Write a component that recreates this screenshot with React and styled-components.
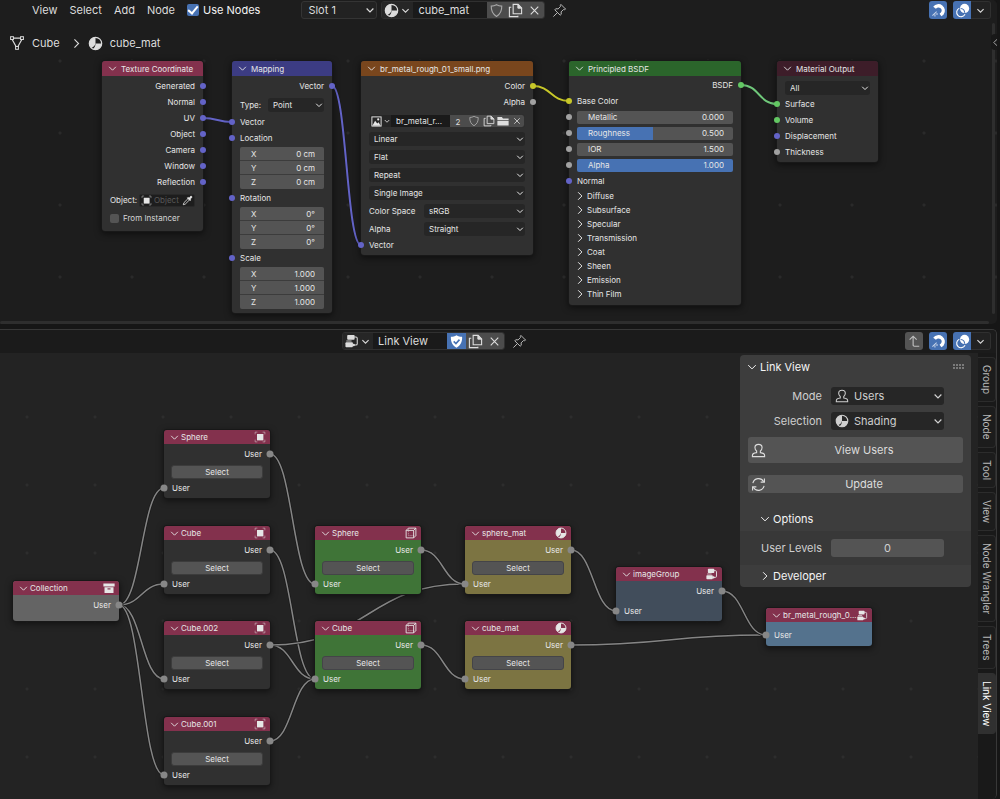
import React from "react";
import styled, { createGlobalStyle } from "styled-components";

const GlobalStyle = createGlobalStyle`
  * { box-sizing: border-box; }
  body {
    margin: 0;
    background: #161616;
    color: #dcdcdc;
    font-family: Inter, "Liberation Sans", sans-serif;
    font-size: 11px;
  }
  button, input, select { font: inherit; color: inherit; margin: 0; }
`;

/* ---------- icons ---------- */

const Svg = styled.svg`
  display: block;
  flex: none;
  width: ${(p) => p.$size || 16}px;
  height: ${(p) => p.$size || 16}px;
  fill: none;
  stroke: currentColor;
  stroke-width: 1;
`;

const Icon = ({ size, children }) => (
  <Svg $size={size} viewBox="0 0 16 16" aria-hidden="true">
    {children}
  </Svg>
);

const ChevronDown = ({ size }) => (
  <Icon size={size}>
    <path d="M3.500 6l4.500 4.500L12.500 6" strokeWidth="1.600" />
  </Icon>
);
const PanelDown = ({ size }) => (
  <Icon size={size}>
    <path d="M2 5l6 6 6-6" strokeWidth="1.600" />
  </Icon>
);
const ChevronRight = ({ size }) => (
  <Icon size={size}>
    <path d="M5 2l6 6-6 6" strokeWidth="1.600" />
  </Icon>
);
const ChevronLeft = ({ size }) => (
  <Icon size={size}>
    <path d="M11 2L5 8l6 6" strokeWidth="1.700" />
  </Icon>
);
const MaterialIcon = ({ size }) => (
  <Icon size={size}>
    <circle cx="8" cy="8" r="6.600" strokeWidth="1.300" />
    <path d="M8 1.400A6.600 6.600 0 0 0 1.400 8c0 1.900.8 3.600 2.100 4.800C5.500 12 7.500 10.500 8 8z" fill="currentColor" stroke="none" />
    <path d="M8 8h6.600c0 3.600-2.900 6.600-6.600 6.600-1 0-2-.3-2.900-.7C7 12.500 8 10.500 8 8z" fill="currentColor" stroke="none" />
  </Icon>
);
const MeshIcon = ({ size }) => (
  <Icon size={size}>
    <path d="M4 3.200h8M3.300 4.700l3.900 7M12.700 4.700l-3.900 7" strokeWidth="1.200" />
    <rect x="1.600" y="1.700" width="2.800" height="2.800" />
    <rect x="11.600" y="1.700" width="2.800" height="2.800" />
    <rect x="6.600" y="11.500" width="2.800" height="2.800" />
  </Icon>
);
const ShieldIcon = ({ size }) => (
  <Icon size={size}>
    <path d="M8 1.800c1.700 1 3.600 1.500 5.600 1.500.2 5-1.400 8.600-5.600 11-4.200-2.400-5.800-6-5.600-11 2 0 3.900-.5 5.600-1.500z" strokeWidth="1.200" />
  </Icon>
);
const ShieldCheckIcon = ({ size }) => (
  <Icon size={size}>
    <path d="M8 1.300c1.800 1.100 3.800 1.600 6 1.600.2 5.400-1.500 9.200-6 11.800-4.500-2.600-6.200-6.400-6-11.800 2.200 0 4.200-.5 6-1.600z" fill="currentColor" stroke="none" />
    <path d="M5 7.800l2.400 2.400L11.200 6" stroke="#4772b3" strokeWidth="1.700" />
  </Icon>
);
const DuplicateIcon = ({ size }) => (
  <Icon size={size}>
    <path d="M5.500 1.500h5.300l3.700 3.700v6.300h-9z" strokeWidth="1.200" />
    <path d="M10.500 1.500v4h4z" fill="currentColor" />
    <path d="M3.500 4.500h-2v10h9v-1" strokeWidth="1.200" />
  </Icon>
);
const CloseIcon = ({ size }) => (
  <Icon size={size}>
    <path d="M2.500 2.500l11 11M13.500 2.500l-11 11" strokeWidth="1.600" />
  </Icon>
);
const PinIcon = ({ size }) => (
  <Icon size={size}>
    <path d="M9.500 1.500l5 5-1.300.7-1-.2-2.500 2.500.2 2.500-1.200 1-5.700-5.700 1-1.200 2.500.2L9 3.800l-.2-1zM5.500 10.500l-4 4" />
  </Icon>
);
const MagnetIcon = ({ size }) => (
  <Icon size={size}>
    <path d="M3.800 5A5 5 0 1 1 12 11.200l-2 1.500" strokeWidth="3.600" />
    <path d="M7.200 13.300l2.600-3.400" stroke="#4772b3" strokeWidth="0.800" />
    <path d="M1.500 13.500l4.500-4.200M4.200 14.500v-2.300M7.500 11.800H5.200" strokeWidth="1.100" opacity=".7" />
  </Icon>
);
const OverlayIcon = ({ size }) => (
  <Icon size={size}>
    <circle cx="10.200" cy="5.800" r="4.900" fill="currentColor" stroke="none" />
    <path d="M4.600 5.600A4.700 4.700 0 1 0 10.700 12" strokeWidth="1.200" />
    <path d="M6 5.800a4.700 4.700 0 0 1 4.300 4.700" stroke="#4772b3" strokeWidth="1.200" />
  </Icon>
);
const NodeTreeIcon = ({ size }) => (
  <Icon size={size}>
    <rect x="2.500" y="1" width="8.500" height="5.500" rx="1" fill="currentColor" stroke="none" />
    <rect x="0.500" y="9.500" width="8.500" height="5.500" rx="1" fill="currentColor" stroke="none" />
    <path d="M1.500 8h6" strokeWidth="1" />
    <path d="M10.500 3.500h2c1 0 1.500.5 1.500 1.500v6c0 1-.5 1.500-1.500 1.500h-4" strokeWidth="1.200" />
    <circle cx="9.800" cy="12.500" r="1.500" fill="currentColor" stroke="none" />
  </Icon>
);
const UpIcon = ({ size }) => (
  <Icon size={size}>
    <path d="M14 14H8.500c-1 0-1.500-.5-1.500-1.500V2.500M3 6.500l4-4 4 4" strokeWidth="1.300" />
  </Icon>
);
const UserIcon = ({ size }) => (
  <Icon size={size}>
    <path d="M6 8.500C4.600 7.600 4.200 6.200 4.200 4.900 4.200 2.800 5.800 1.500 8 1.500s3.800 1.300 3.800 3.400c0 1.300-.4 2.700-1.800 3.600v1.800c2.600.3 4.500 1.200 4.500 3v1.200h-13v-1.200c0-1.800 1.900-2.700 4.500-3z" strokeWidth="1.200" />
  </Icon>
);
const RefreshIcon = ({ size }) => (
  <Icon size={size}>
    <path d="M2 6.500a6.200 6.200 0 0 1 11.500-1.500M14 9.500A6.200 6.200 0 0 1 2.500 11" strokeWidth="1.200" />
    <path d="M14.300 1.500v4h-4M1.700 14.500v-4h4" strokeWidth="1.200" />
  </Icon>
);
const ObjectIcon = ({ size }) => (
  <Icon size={size}>
    <rect x="4" y="4" width="8.500" height="8.500" fill="currentColor" stroke="none" />
    <path d="M1.500 4.500v-3h3M11.500 1.500h3v3M14.500 11.500v3h-3M4.500 14.500h-3v-3" opacity=".6" />
  </Icon>
);
const CollectionIcon = ({ size }) => (
  <Icon size={size}>
    <path d="M.5 2h15v4H.5zM2 7h12v7.500H2z" fill="currentColor" stroke="none" />
    <path d="M6 9.200h4" stroke="#7c2b46" strokeWidth="1.500" />
  </Icon>
);
const CubeIcon = ({ size }) => (
  <Icon size={size}>
    <path d="M1.500 4.500h10v10h-10zM1.500 4.500l3-3h10l-3 3M14.500 1.500v10l-3 3" strokeWidth="1.200" />
    <path d="M4.500 2v9.500h9.500" opacity=".6" strokeDasharray="2 1" />
  </Icon>
);
const ImageIcon = ({ size }) => (
  <Icon size={size}>
    <rect x="1.300" y="1.300" width="13.400" height="13.400" strokeWidth="1.400" />
    <path d="M2 14l4-7 3 4 2-2 3 5z" fill="currentColor" stroke="none" />
    <circle cx="10.500" cy="5" r="1.600" fill="currentColor" stroke="none" />
  </Icon>
);
const FolderIcon = ({ size }) => (
  <Icon size={size}>
    <path d="M.5 2.500h6l1.500 2h7.500v2H.5zM.5 7.500h15v6.500H.5z" fill="currentColor" stroke="none" />
  </Icon>
);
const DropperIcon = ({ size }) => (
  <Icon size={size}>
    <path d="M9 3.500l1.500 1 2-2.700c1-.8 2.700.9 1.900 1.900l-2.700 2 1 1.500-1 1-4-4z" fill="currentColor" />
    <path d="M8.500 5.500L2.800 11.200l-1 3 3-1 5.700-5.700" strokeWidth="1.200" />
  </Icon>
);

/* ---------- shared controls ---------- */

const Picker = styled.span`
  position: relative;
  display: flex;
  align-items: center;
  flex: ${(p) => (p.$fill ? "1" : "none")};
  min-width: 0;
  width: ${(p) => (p.$width ? `${p.$width}px` : "auto")};
  height: ${(p) => p.$height}px;
  background: ${(p) => (p.$dark ? "#222222" : "#262626")};
  border: ${(p) => (p.$outline ? "1px solid #343434" : "0")};
  border-radius: 3px;

  select {
    appearance: none;
    width: 100%;
    height: 100%;
    padding: 0 14px 0 ${(p) => p.$indent}px;
    border: 0;
    background: none;
    outline: none;
    text-overflow: ellipsis;
  }
  svg { position: absolute; pointer-events: none; }
  svg:last-child { right: 0; }
  svg:not(:last-child) { left: 4px; }
`;

const Dropdown = ({ label, value, icon, height = 14, indent = 5, chevron = 10, ...rest }) => (
  <Picker $height={height} $indent={indent} {...rest}>
    {icon}
    <select aria-label={label} defaultValue={value}>
      <option>{value}</option>
    </select>
    <ChevronDown size={chevron} />
  </Picker>
);

/* ---------- editor frame ---------- */

const Screen = styled.main`
  display: flex;
  flex-direction: column;
  gap: 5px;
  min-height: 100vh;
  padding-right: 3px;
`;

const Editor = styled.section`
  position: relative;
  display: flex;
  flex-direction: column;
  flex: ${(p) => (p.$grow ? "1" : "none")};
  background: ${(p) => p.$bg};
  border: solid #383838;
  border-width: ${(p) => (p.$grow ? "1px 1px 0 0" : "0")};
  border-radius: 0 5px 5px 0;
  overflow: hidden;
`;

const Header = styled.header`
  display: flex;
  align-items: center;
  height: ${(p) => p.$height}px;
  padding: 0 ${(p) => p.$end}px ${(p) => p.$bottom || 0}px ${(p) => p.$start}px;
  background: ${(p) => p.$bg};
`;

const Menu = styled.nav`
  display: flex;
  gap: 12px;
`;

const MenuButton = styled.button`
  padding: 0;
  border: 0;
  background: none;
`;

const Check = styled.label`
  display: flex;
  align-items: center;
  gap: 4px;
  height: 14px;
  color: ${(p) => (p.$small ? "#d5d5d5" : "#f4f4f4")};

  input {
    appearance: none;
    display: grid;
    place-items: center;
    width: ${(p) => (p.$small ? 9 : 12)}px;
    height: ${(p) => (p.$small ? 9 : 12)}px;
    border-radius: 2px;
    background: #545454;
  }
  input:checked { background: #4772b3; }
  input:checked::after {
    content: "";
    width: 4px;
    height: 8px;
    margin-bottom: 2px;
    border: solid #ffffff;
    border-width: 0 2px 2px 0;
    transform: rotate(40deg);
  }
`;

const Spacer = styled.span`
  flex: ${(p) => (p.$size ? "none" : "1")};
  width: ${(p) => p.$size || 0}px;
`;

const DataBlock = styled.div`
  display: flex;
  height: ${(p) => p.$height}px;
  border: 1px solid #303030;
  border-radius: 3px;
  overflow: hidden;
  background: #1c1c1c;
`;

const DataType = styled.button`
  display: flex;
  align-items: center;
  justify-content: center;
  gap: 1px;
  width: ${(p) => p.$width}px;
  padding: 0;
  border: 0;
  background: #262626;
`;

const DataName = styled.input`
  flex: 1;
  width: ${(p) => p.$width}px;
  min-width: 0;
  padding: 0 5px;
  border: 0;
  outline: none;
  background: #1a1a1a;
  text-overflow: ellipsis;
`;

const DataButton = styled.button`
  display: grid;
  place-items: center;
  width: ${(p) => p.$width}px;
  padding: 0;
  border: 0;
  background: ${(p) => (p.$active ? "#4772b3" : "#4c4c4c")};
  color: ${(p) => (p.$active ? "#ffffff" : p.$dim ? "#a8a8a8" : "#dddddd")};
`;

const ToolButton = styled.button`
  display: grid;
  place-items: center;
  width: 18px;
  height: 18px;
  padding: 0;
  border: 0;
  border-radius: ${(p) => (p.$joined ? "3px 0 0 3px" : "3px")};
  background: ${(p) => (p.$plain ? "none" : p.$active ? "#4772b3" : "#545454")};
  color: ${(p) => (p.$active ? "#ffffff" : "#c0c0c0")};
`;

const MoreButton = styled.button`
  display: grid;
  place-items: center;
  width: 20px;
  height: 18px;
  padding: 0;
  border: 1px solid #303030;
  border-left: 0;
  border-radius: 0 3px 3px 0;
  background: #222222;
`;

const Snapping = () => (
  <>
    <ToolButton $active aria-label="Snap">
      <MagnetIcon size={15} />
    </ToolButton>
    <Spacer $size={6} />
    <ToolButton $active $joined aria-label="Overlays">
      <OverlayIcon size={15} />
    </ToolButton>
    <MoreButton aria-label="Overlay options">
      <ChevronDown size={11} />
    </MoreButton>
  </>
);

const Canvas = styled.div`
  position: relative;
  flex: 1;
  min-height: ${(p) => p.$minHeight}px;
  overflow: hidden;
  background-image: radial-gradient(circle at center, ${(p) => p.$dots} 1px, transparent 2px);
  background-size: ${(p) => p.$grid}px ${(p) => p.$grid}px;
  background-position: ${(p) => p.$origin};
`;

const LinkLayer = styled.svg`
  position: absolute;
  inset: 0;
  width: 100%;
  height: 100%;
  fill: none;
`;

const Links = ({ items, width }) => (
  <LinkLayer aria-hidden="true">
    {items.map(([x1, y1, x2, y2, color], i) => {
      const h = (x2 - x1) / 2;
      const d = `M${x1} ${y1}C${x1 + h} ${y1} ${x2 - h} ${y2} ${x2} ${y2}`;
      return (
        <g key={i}>
          <path d={d} stroke="#1a1a1a" strokeWidth="3" />
          <path d={d} stroke={color} strokeWidth={width} />
        </g>
      );
    })}
  </LinkLayer>
);

const Breadcrumb = styled.div`
  position: absolute;
  top: 15px;
  left: 9px;
  display: flex;
  align-items: center;
  height: 16px;
`;

const ScrollY = styled.div`
  position: absolute;
  top: 3px;
  right: 2px;
  bottom: 10px;
  width: 3px;
  border-radius: 2px;
  background: #2e2e2e;
`;

const ScrollX = styled.div`
  position: absolute;
  left: 0;
  right: 8px;
  bottom: 0;
  height: 3px;
  border-radius: 2px;
  background: #2e2e2e;
`;

const RegionHandle = styled.button`
  position: absolute;
  top: 14px;
  right: 0;
  width: 6px;
  height: 16px;
  padding: 0;
  border: 0;
  border-radius: 4px 0 0 4px;
  background: #181818;
  color: #b0b0b0;
  display: grid;
  place-items: center;
`;

/* ---------- nodes ---------- */

const NodeBox = styled.article`
  position: absolute;
  left: ${(p) => p.$x}px;
  top: ${(p) => p.$y}px;
  width: ${(p) => p.$w}px;
  min-height: ${(p) => p.$h}px;
  border-radius: 3px;
  background: ${(p) => p.$bg || "#303030"};
  box-shadow: 0 0 0 1px #181818, 0 2px 6px 1px rgba(0, 0, 0, 0.5);
  font-size: 8px;
  line-height: 14px;
  color: #e6e6e6;
`;

const NodeTitle = styled.h2`
  display: flex;
  align-items: center;
  gap: ${(p) => p.$gap}px;
  height: ${(p) => p.$height}px;
  margin: 0;
  padding: 0 4px 0 6px;
  border-radius: 3px 3px 0 0;
  background: ${(p) => p.$color};
  font-size: 8px;
  font-weight: 400;

  span {
    flex: 1;
    min-width: 0;
    white-space: nowrap;
  }
`;

const NodeBody = styled.div`
  padding-top: ${(p) => p.$top}px;
`;

const Row = styled.div`
  position: relative;
  display: flex;
  align-items: center;
  justify-content: ${(p) => (p.$out ? "flex-end" : "flex-start")};
  height: 16px;
  padding: 0 8px;
`;

const Dot = styled.i`
  position: absolute;
  top: 50%;
  left: ${(p) => (p.$out ? "auto" : "0")};
  right: ${(p) => (p.$out ? "0" : "auto")};
  width: ${(p) => p.$size}px;
  height: ${(p) => p.$size}px;
  border-radius: 50%;
  background: ${(p) => p.$color};
  transform: translate(${(p) => (p.$out ? "50%" : "-50%")}, -50%);
`;

const VECTOR = "#6363c7";
const FLOAT = "#a1a1a1";
const COLOR = "#c7c729";
const SHADER = "#63c763";
const USER = "#878787";

const Socket = ({ out, color, size = 6, children }) => (
  <Row $out={out}>
    {children}
    <Dot $out={out} $color={color} $size={size} />
  </Row>
);

const FieldRow = styled.div`
  display: flex;
  align-items: center;
  height: 14px;
  margin: ${(p) => p.$margin || "0"};
  padding: 0 8px;
`;

const RowLabel = styled.span`
  flex: none;
  width: ${(p) => p.$width}px;
`;

const VectorField = styled.div`
  display: flex;
  flex-direction: column;
  gap: 1px;
  margin: 1px 8px;
  border-radius: 2px;
  overflow: hidden;
  background: #3c3c3c;
`;

const Component = styled.label`
  display: flex;
  align-items: center;
  height: ${(p) => (p.$last ? 14 : 13)}px;
  padding: 0 9px 0 11px;
  background: #545454;
`;

const ValueInput = styled.input`
  flex: 1;
  width: 0;
  min-width: 0;
  padding: 0;
  border: 0;
  background: none;
  outline: none;
  text-align: right;
`;

const Vector3 = ({ name, value }) => (
  <VectorField role="group" aria-label={name}>
    {["X", "Y", "Z"].map((axis) => (
      <Component key={axis} $last={axis === "Z"}>
        {axis}
        <ValueInput defaultValue={value} />
      </Component>
    ))}
  </VectorField>
);

const Slider = styled.label`
  flex: 1;
  display: flex;
  align-items: center;
  height: 13px;
  padding: 0 9px 0 11px;
  border-radius: 2px;
  background: linear-gradient(to right, #4772b3 ${(p) => p.$fill}%, #545454 ${(p) => p.$fill}%);
`;

const SliderSocket = ({ name, value, fill = 0 }) => (
  <Socket color={FLOAT}>
    <Slider $fill={fill}>
      {name}
      <ValueInput defaultValue={value} />
    </Slider>
  </Socket>
);

const SubPanel = styled.button`
  display: flex;
  align-items: center;
  gap: 2px;
  width: 100%;
  height: 14px;
  padding: 0 6px;
  border: 0;
  background: none;
`;

const ObjectField = styled.div`
  flex: 1;
  display: flex;
  align-items: center;
  gap: 2px;
  min-width: 0;
  height: 13px;
  padding: 0 1px;
  border: 1px solid #282828;
  border-radius: 2px;
  background: #1d1d1d;

  input {
    flex: 1;
    min-width: 0;
    width: 0;
    padding: 0;
    border: 0;
    background: none;
    outline: none;
  }
  input::placeholder { color: #595959; opacity: 1; }
`;

const SelectButton = styled.button`
  display: block;
  width: calc(100% - 14px);
  height: 14px;
  margin: 3px 7px 1px;
  padding: 0;
  border: 1px solid ${(p) => (p.$ring ? "#444448" : "#3c3c3c")};
  border-radius: 3px;
  background: #545454;
  line-height: 12px;
`;

const Node = ({ x, y, w, h, color, bg, title, icon, titleHeight = 15, gap = 4, top = 2, children }) => (
  <NodeBox $x={x} $y={y} $w={w} $h={h} $bg={bg}>
    <NodeTitle $color={color} $height={titleHeight} $gap={gap}>
      <PanelDown size={9} />
      <span>{title}</span>
      {icon}
    </NodeTitle>
    <NodeBody $top={top}>{children}</NodeBody>
  </NodeBox>
);

const FieldGap = styled.div`
  padding-top: ${(p) => p.$size}px;
`;

const UserNode = ({ output = true, input = true, select, ring, spacer = 0, ...node }) => (
  <Node color="#83314d" w={106} titleHeight={14} gap={2} {...node}>
    {output && (
      <Socket out color={USER} size={7}>User</Socket>
    )}
    {select && <SelectButton $ring={ring}>Select</SelectButton>}
    {input && (
      <FieldGap $size={spacer}>
        <Socket color={USER} size={7}>User</Socket>
      </FieldGap>
    )}
  </Node>
);

/* ---------- sidebar ---------- */

const Sidebar = styled.aside`
  position: absolute;
  top: 2px;
  right: 25px;
  width: 231px;
  border-radius: 4px;
  overflow: hidden;
  background: #3d3d3d;
`;

const PanelHeader = styled.button`
  display: flex;
  align-items: center;
  gap: 3px;
  width: 100%;
  height: ${(p) => p.$height || 24}px;
  padding: 0 6px 0 ${(p) => (p.$nested ? 20 : 7)}px;
  border: 0;
  background: none;
  color: #f4f4f4;
  text-align: left;

  span { flex: 1; }
`;

const Grip = styled.i`
  width: 12px;
  height: 6px;
  background: radial-gradient(circle at 1px 1px, #7a7a7a 1px, transparent 1px) 0 0 / 3px 3px;
`;

const PropRow = styled.label`
  display: grid;
  grid-template-columns: 82px 113px;
  column-gap: 9px;
  align-items: center;
  height: 25px;
  color: #cfcfcf;

  > span:first-child { text-align: right; }
`;

const WideButton = styled.button`
  position: relative;
  display: grid;
  place-items: center;
  width: calc(100% - 16px);
  height: ${(p) => p.$height}px;
  margin: ${(p) => p.$margin} 8px 0;
  padding: 0 0 0 17px;
  border: 0;
  border-radius: 3px;
  background: #545454;

  svg { position: absolute; left: 3px; }
`;

const SubSection = styled.div`
  height: 34px;
  padding-top: 4px;
  background: #383838;
`;

const NumberInput = styled.input`
  width: 113px;
  height: 18px;
  padding: 0;
  border: 0;
  border-radius: 3px;
  background: #545454;
  text-align: center;
`;

const Tabs = styled.nav`
  position: absolute;
  top: 0;
  right: 0;
  bottom: 0;
  display: flex;
  flex-direction: column;
  gap: 4px;
  width: 18px;
  padding-top: 4px;
  background: #191919;
`;

const Tab = styled.button`
  flex: none;
  display: flex;
  align-items: center;
  justify-content: center;
  width: 18px;
  padding: 7px 0;
  border: 1px solid ${(p) => (p.$active ? "#303030" : "#2c2c2c")};
  border-left: 0;
  border-radius: 0 4px 4px 0;
  background: ${(p) => (p.$active ? "#303030" : "#1c1c1c")};
  color: ${(p) => (p.$active ? "#ffffff" : "#b8b8b8")};
  font-size: 10px;
  writing-mode: vertical-rl;
`;

/* ---------- shader editor ---------- */

const shaderLinks = [
  [203, 98, 232, 102, VECTOR],
  [332, 66, 361, 225, VECTOR],
  [533, 66, 569, 81, COLOR],
  [741, 65, 777, 84, "#6fc77a"],
];

const ImageRow = styled(DataBlock)`
  margin: 0 8px;
`;

const Stack = styled.div`
  display: flex;
  flex-direction: column;
  gap: 4px;
  padding: 4px 0 1px;
`;

const ShaderEditor = () => (
  <Editor $bg="#1d1d1d" aria-label="Shader editor">
    <Header $height={20} $start={32} $end={6} $bg="#1d1d1d">
      <Menu>
        <MenuButton>View</MenuButton>
        <MenuButton>Select</MenuButton>
        <MenuButton>Add</MenuButton>
        <MenuButton>Node</MenuButton>
      </Menu>
      <Spacer $size={12} />
      <Check>
        <input type="checkbox" defaultChecked />
        Use Nodes
      </Check>
      <Spacer $size={41} />
      <Dropdown label="Slot" value="Slot 1" height={18} indent={6} chevron={12} $width={76} $outline $dark />
      <Spacer $size={4} />
      <DataBlock $height={18}>
        <DataType $width={31} aria-label="Browse material">
          <MaterialIcon size={15} />
          <ChevronDown size={11} />
        </DataType>
        <DataName $width={74} aria-label="Material name" defaultValue="cube_mat" />
        <DataButton $width={19} $dim aria-label="Fake user"><ShieldIcon size={15} /></DataButton>
        <DataButton $width={19} aria-label="New material"><DuplicateIcon size={15} /></DataButton>
        <DataButton $width={19} aria-label="Unlink"><CloseIcon size={11} /></DataButton>
      </DataBlock>
      <Spacer $size={5} />
      <ToolButton $plain aria-label="Pin"><PinIcon size={15} /></ToolButton>
      <Spacer />
      <Snapping />
    </Header>
    <Canvas $minHeight={304} $grid={72} $origin="24px 5px" $dots="#2a2a2a">
      <Breadcrumb>
        <MeshIcon size={16} />
        <Spacer $size={7} />
        Cube
        <Spacer $size={11} />
        <ChevronRight size={11} />
        <Spacer $size={6} />
        <MaterialIcon size={15} />
        <Spacer $size={7} />
        cube_mat
      </Breadcrumb>
      <Links items={shaderLinks} width={2} />

      <Node x={102} y={41} w={101} h={170} color="#83314d" title="Texture Coordinate">
        {["Generated", "Normal", "UV", "Object", "Camera", "Window", "Reflection"].map((name) => (
          <Socket key={name} out color={VECTOR}>{name}</Socket>
        ))}
        <FieldRow $margin="3px 0 4px">
          <RowLabel $width={29}>Object:</RowLabel>
          <ObjectField>
            <ObjectIcon size={11} />
            <input aria-label="Object" placeholder="Object" />
            <DropperIcon size={11} />
          </ObjectField>
        </FieldRow>
        <FieldRow>
          <Check $small>
            <input type="checkbox" />
            From Instancer
          </Check>
        </FieldRow>
      </Node>

      <Node x={232} y={41} w={100} h={252} color="#3c3c83" title="Mapping">
        <Socket out color={VECTOR}>Vector</Socket>
        <FieldRow $margin="4px 0 2px">
          <RowLabel $width={28}>Type:</RowLabel>
          <Dropdown label="Type" value="Point" $fill />
        </FieldRow>
        <Socket color={VECTOR}>Vector</Socket>
        <Socket color={VECTOR}>Location</Socket>
        <Vector3 name="Location" value="0 cm" />
        <Socket color={VECTOR}>Rotation</Socket>
        <Vector3 name="Rotation" value="0°" />
        <Socket color={VECTOR}>Scale</Socket>
        <Vector3 name="Scale" value="1.000" />
      </Node>

      <Node x={361} y={41} w={172} h={194} color="#79461d" title="br_metal_rough_01_small.png">
        <Socket out color={COLOR}>Color</Socket>
        <Socket out color={FLOAT}>Alpha</Socket>
        <Stack>
          <ImageRow $height={14}>
            <DataType $width={21} aria-label="Browse image">
              <ImageIcon size={11} />
              <ChevronDown size={8} />
            </DataType>
            <DataName $width={60} aria-label="Image name" defaultValue="br_metal_r..." />
            <DataButton $width={16}>2</DataButton>
            <DataButton $width={15} $dim aria-label="Fake user"><ShieldIcon size={12} /></DataButton>
            <DataButton $width={15} aria-label="New image"><DuplicateIcon size={12} /></DataButton>
            <DataButton $width={14} aria-label="Open image"><FolderIcon size={12} /></DataButton>
            <DataButton $width={14} aria-label="Unlink"><CloseIcon size={8} /></DataButton>
          </ImageRow>
          <FieldRow><Dropdown label="Interpolation" value="Linear" $fill /></FieldRow>
          <FieldRow><Dropdown label="Projection" value="Flat" $fill /></FieldRow>
          <FieldRow><Dropdown label="Extension" value="Repeat" $fill /></FieldRow>
          <FieldRow><Dropdown label="Source" value="Single Image" $fill /></FieldRow>
          <FieldRow>
            <RowLabel $width={55}>Color Space</RowLabel>
            <Dropdown label="Color Space" value="sRGB" $fill />
          </FieldRow>
          <FieldRow>
            <RowLabel $width={55}>Alpha</RowLabel>
            <Dropdown label="Alpha mode" value="Straight" $fill />
          </FieldRow>
        </Stack>
        <Socket color={VECTOR}>Vector</Socket>
      </Node>

      <Node x={569} y={41} w={172} h={244} top={1} color="#2b652b" title="Principled BSDF">
        <Socket out color={SHADER}>BSDF</Socket>
        <Socket color={COLOR}>Base Color</Socket>
        <SliderSocket name="Metallic" value="0.000" />
        <SliderSocket name="Roughness" value="0.500" fill={49} />
        <SliderSocket name="IOR" value="1.500" />
        <SliderSocket name="Alpha" value="1.000" fill={100} />
        <Socket color={VECTOR}>Normal</Socket>
        {["Diffuse", "Subsurface", "Specular", "Transmission", "Coat", "Sheen", "Emission", "Thin Film"].map((name) => (
          <SubPanel key={name}>
            <ChevronRight size={10} />
            {name}
          </SubPanel>
        ))}
      </Node>

      <Node x={777} y={41} w={101} h={101} color="#3d1d29" title="Material Output">
        <FieldRow $margin="3px 0 1px">
          <Dropdown label="Target" value="All" $fill />
        </FieldRow>
        <Socket color={SHADER}>Surface</Socket>
        <Socket color={SHADER}>Volume</Socket>
        <Socket color={VECTOR}>Displacement</Socket>
        <Socket color={FLOAT}>Thickness</Socket>
      </Node>

      <ScrollY />
      <ScrollX />
      <RegionHandle aria-label="Open sidebar"><ChevronLeft size={9} /></RegionHandle>
    </Canvas>
  </Editor>
);

/* ---------- link view editor ---------- */

const userLinks = [
  [119, 252, 164, 135],
  [119, 252, 164, 231],
  [119, 252, 164, 326],
  [119, 252, 164, 422],
  [270, 101, 315, 231],
  [270, 197, 315, 326],
  [270, 292, 315, 326],
  [270, 388, 315, 326],
  [270, 292, 465, 231],
  [421, 197, 465, 231],
  [421, 292, 465, 326],
  [571, 197, 616, 258],
  [571, 292, 766, 282],
  [722, 238, 766, 282],
].map((link) => [...link, "#858585"]);

const objects = [
  ["Sphere", 77],
  ["Cube", 173],
  ["Cube.002", 268],
  ["Cube.001", 364],
];

const LinkViewEditor = () => (
  <Editor $grow $bg="#232323" aria-label="Link view editor">
    <Header $height={23} $start={342} $end={5} $bottom={1} $bg="#1b1b1b">
      <DataBlock $height={18}>
        <DataType $width={30} aria-label="Browse node tree">
          <NodeTreeIcon size={14} />
          <ChevronDown size={11} />
        </DataType>
        <DataName $width={74} aria-label="Node tree name" defaultValue="Link View" />
        <DataButton $width={19} $active aria-label="Fake user"><ShieldCheckIcon size={15} /></DataButton>
        <DataButton $width={19} aria-label="New node tree"><DuplicateIcon size={15} /></DataButton>
        <DataButton $width={19} aria-label="Unlink"><CloseIcon size={11} /></DataButton>
      </DataBlock>
      <Spacer $size={5} />
      <ToolButton $plain aria-label="Pin"><PinIcon size={15} /></ToolButton>
      <Spacer />
      <ToolButton aria-label="Go to parent tree"><UpIcon size={14} /></ToolButton>
      <Spacer $size={6} />
      <Snapping />
    </Header>
    <Canvas $minHeight={446} $grid={68} $origin="61px 30px" $dots="#2d2d2d">
      <Links items={userLinks} width={1.5} />

      <UserNode x={13} y={228} h={40} bg="#646464" title="Collection" icon={<CollectionIcon size={12} />} input={false} />
      {objects.map(([title, y]) => (
        <UserNode key={title} x={164} y={y} h={68} title={title} icon={<ObjectIcon size={12} />} select />
      ))}
      <UserNode x={315} y={173} h={68} bg="#3f7437" title="Sphere" icon={<CubeIcon size={12} />} select ring />
      <UserNode x={315} y={268} h={68} bg="#3f7437" title="Cube" icon={<CubeIcon size={12} />} select ring />
      <UserNode x={465} y={173} h={68} bg="#7c7442" title="sphere_mat" icon={<MaterialIcon size={12} />} select ring />
      <UserNode x={465} y={268} h={68} bg="#7c7442" title="cube_mat" icon={<MaterialIcon size={12} />} select ring />
      <UserNode x={616} y={214} h={54} bg="#414d5b" title="imageGroup" icon={<NodeTreeIcon size={12} />} spacer={4} />
      <UserNode x={766} y={255} h={38} bg="#54728d" title="br_metal_rough_0..." icon={<NodeTreeIcon size={11} />} output={false} spacer={3} />

      <Sidebar aria-label="Link View">
        <PanelHeader>
          <PanelDown size={10} />
          <span>Link View</span>
          <Grip />
        </PanelHeader>
        <FieldGap $size={4}>
          <PropRow>
            <span>Mode</span>
            <Dropdown label="Mode" value="Users" icon={<UserIcon size={14} />} height={18} indent={23} chevron={12} />
          </PropRow>
          <PropRow>
            <span>Selection</span>
            <Dropdown label="Selection" value="Shading" icon={<MaterialIcon size={14} />} height={18} indent={23} chevron={12} />
          </PropRow>
        </FieldGap>
        <WideButton $height={26} $margin="4px"><UserIcon size={15} />View Users</WideButton>
        <WideButton $height={18} $margin="12px"><RefreshIcon size={15} />Update</WideButton>
        <FieldGap $size={14}>
          <PanelHeader $nested>
            <PanelDown size={10} />
            <span>Options</span>
          </PanelHeader>
        </FieldGap>
        <SubSection>
          <PropRow>
            <span>User Levels</span>
            <NumberInput defaultValue="0" />
          </PropRow>
        </SubSection>
        <PanelHeader $nested $height={22}>
          <ChevronRight size={10} />
          <span>Developer</span>
        </PanelHeader>
      </Sidebar>

      <Tabs>
        {["Group", "Node", "Tool", "View", "Node Wrangler", "Trees", "Link View"].map((name) => (
          <Tab key={name} $active={name === "Link View"}>{name}</Tab>
        ))}
      </Tabs>
    </Canvas>
  </Editor>
);

export default function App() {
  return (
    <>
      <GlobalStyle />
      <Screen>
        <ShaderEditor />
        <LinkViewEditor />
      </Screen>
    </>
  );
}
